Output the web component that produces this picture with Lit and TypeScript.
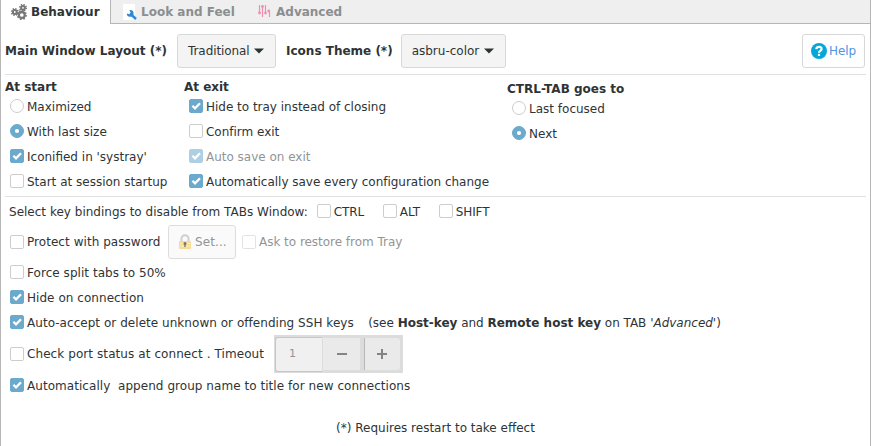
import { LitElement, html, css, svg, nothing } from "lit";
import { customElement, property } from "lit/decorators.js";

@customElement("check-item")
class CheckItem extends LitElement {
  @property({ type: String }) kind = "check";
  @property({ type: Boolean }) on = false;
  @property({ type: Boolean }) dim = false;

  static styles = css`
    :host { display: block; height: 25px; white-space: pre; }
    .row { display: flex; align-items: flex-start; }
    .box { box-sizing: border-box; width: 14px; height: 14px; border: 1px solid #cdcdcd; border-radius: 2px; background: #fff; margin: 5px 3px 0 0; flex: none; }
    .text { padding-top: var(--text-top, 6px); }
    .radio { border-radius: 50%; }
    .on { background: #6ba9cd; border-color: #6ba9cd; }
    .dim .box { opacity: 0.55; }
    .dim { color: #929595; }
    svg { display: block; margin: -1px; }
  `;

  render() {
    const mark = this.kind === "radio"
      ? svg`<circle cx="7" cy="7" r="2.1" fill="#fff"/>`
      : svg`<path d="M3.4 6.7 L6 9.3 L11 4.2" fill="none" stroke="#fff" stroke-width="2.3"/>`;
    return html`<div class="row ${this.dim ? "dim" : ""}">
      <span class="box ${this.kind} ${this.on ? "on" : ""}">${this.on
        ? html`<svg width="14" height="14" viewBox="0 0 14 14">${mark}</svg>` : nothing}</span><span class="text"><slot></slot></span></div>`;
  }
}

const gear = (x: number, y: number, r: number, w: number) => {
  const rim = r + w / 2 + 0.3;
  const dash = (rim * Math.PI) / 8;
  return svg`
  <circle cx=${x} cy=${y} r=${r} fill="none" stroke="#777" stroke-width=${w}/>
  <circle cx=${x} cy=${y} r=${rim} fill="none" stroke="#777" stroke-width="1.7" stroke-dasharray=${`${dash} ${dash}`}/>`;
};

@customElement("app-root")
class AppRoot extends LitElement {
  static styles = css`
    :host { display: block; width: 871px; height: 446px; overflow: hidden; background: #fff; color: #2e3436; font: 12px/14px "DejaVu Sans", sans-serif; }
    * { box-sizing: border-box; }
    svg { display: block; flex: none; }
    .page { height: 446px; border: solid #b6b6b6; border-width: 0 1px; }
    .tabs { display: flex; height: 24px; font-weight: bold; white-space: nowrap; }
    .tab { display: flex; padding-top: 5px; }
    .tab svg { margin-top: -1px; }
    .tab.active { width: 109px; padding-left: 10px; gap: 3px; }
    .rest { flex: 1; display: flex; background: #efefef; border-left: 1px solid #b6b6b6; border-bottom: 1px solid #b6b6b6; color: #8b8e8f; }
    .look { padding-left: 12px; width: 147px; gap: 3px; }
    .adv { gap: 5px; }
    .toolbar { display: flex; align-items: center; height: 51px; margin: 0 4px; padding: 4px 0 0; border-bottom: 1px solid #e1e1e1; white-space: nowrap; }
    b { font-weight: bold; }
    .btn { display: flex; align-items: center; height: 34px; border: 1px solid #d8d8d8; border-radius: 3px; background: #f4f4f4; }
    .combo { padding-left: 10px; gap: 5px; }
    .c1 { width: 99px; margin: 0 10px; gap: 4px; letter-spacing: -0.08px; }
    .c2 { width: 105px; margin-left: 8px; }
    .help { margin-left: auto; margin-right: 1px; width: 63px; background: #fff; color: #5294e2; padding-left: 8px; gap: 2px; letter-spacing: -0.1px; }
    .columns { display: flex; height: 122px; margin: 0 4px; padding-top: 5px; border-bottom: 1px solid #e1e1e1; }
    .columns b { display: block; white-space: nowrap; height: 14px; }
    .columns check-item { margin-left: 5px; }
    .a { width: 179px; }
    .b { width: 323px; letter-spacing: -0.015px; }
    .c { padding-top: 2px; }
    .row { display: flex; align-items: flex-start; padding-left: 9px; white-space: pre; }
    .keys { height: 28px; padding: 2px 0 0 8px; }
    .keys > span { padding-top: 6px; letter-spacing: 0.01px; }
    .keys check-item { letter-spacing: -0.15px; }
    .keys check-item:nth-of-type(1) { margin-left: 9px; width: 66px; }
    .keys check-item:nth-of-type(2) { width: 56px; }
    .protect { height: 35px; --text-top: 5px; }
    .protect check-item { margin-top: 5px; letter-spacing: -0.03px; }
    .protect check-item:first-child { width: 151px; letter-spacing: 0.05px; }
    .set { width: 68px; margin: 0 6px 0 7px; padding-left: 9px; gap: 3px; background: #fafafa; border-color: #dddddd; color: #929595; letter-spacing: 0.1px; }
    .line { height: 25px; letter-spacing: 0.05px; }
    .ssh { letter-spacing: 0.04px; }
    .ssh .note { letter-spacing: -0.01px; margin-left: -1px; }
    .port { height: 38px; --text-top: 5px; }
    .port check-item { width: 254px; margin-top: 7px; letter-spacing: 0.08px; }
    .spin { display: flex; width: 129px; height: 38px; margin-left: 10px; padding: 2px 2px 2px 1px; background: #dcdcdc; }
    .num { width: 47px; height: 35px; padding: 9px 0 0 13px; border: 1px solid #c6c6c6; border-right: 0; border-radius: 3px 0 0 3px; background: #f0f0f0; color: #929595; font-size: 11px; }
    .step { display: flex; justify-content: center; align-items: center; height: 32px; margin-top: 1px; background: #eaeaea; }
    .minus { width: 37px; margin-left: 1px; }
    .plus { width: 36px; margin-left: 4px; padding-right: 1px; border-left: 1px solid #b8b8b8; border-radius: 0 3px 3px 0; }
    .foot { margin-top: 23px; text-align: center; height: 14px; }
  `;

  render() {
    const arrow = html`<svg width="10" height="6" viewBox="0 0 10 6"><path d="M0 .5H10L5 5.5Z" fill="#2e3436"/></svg>`;
    return html`<div class="page">
      <div class="tabs">
        <div class="tab active">
          <svg width="17" height="16" viewBox="0 0 17 16">${gear(3.8, 8, 1.9, 2)}${gear(12, 3.8, 1.9, 2)}${gear(10.8, 11, 2.9, 2.1)}</svg>
          <span>Behaviour</span>
        </div>
        <div class="rest">
          <div class="tab look">
            <svg width="15" height="16" viewBox="0 0 15 16"><rect width="12" height="16" fill="#fff"/><path d="M7.5 10L13 15" stroke="#2e87d2" stroke-width="2.4"/><path d="M6.4 6.1A3.4 3.4 0 1 1 3.8 9.6L6.3 10.2 7.6 8.6Z" fill="#2e87d2"/></svg>
            <span>Look and Feel</span>
          </div>
          <div class="tab adv">
            <svg width="13" height="14" viewBox="0 0 13 14"><g stroke="#ef8fb0" stroke-width="1.2" fill="none"><path d="M1.5 1V9M4.5 1V13M7.5 1V9M11.5 7V13"/></g><g fill="#ef8fb0"><circle cx="1.5" cy="9" r="1.4"/><circle cx="4.5" cy="2.6" r="1.4"/><circle cx="7.5" cy="9" r="1.4"/><circle cx="10.8" cy="7" r="1.4"/></g></svg>
            <span>Advanced</span>
          </div>
        </div>
      </div>
      <div class="toolbar">
        <b>Main Window Layout (*)</b><div class="btn combo c1">Traditional${arrow}</div>
        <b>Icons Theme (*)</b><div class="btn combo c2">asbru-color${arrow}</div>
        <div class="btn help"><svg width="16" height="16" viewBox="0 0 16 16"><circle cx="8" cy="8" r="8" fill="#06a7d8"/><path d="M5.3 6.1C5.6 3.3 10.7 3.2 10.6 6.1C10.5 7.9 8 7.8 8 9.8" fill="none" stroke="#fff" stroke-width="2.2"/><rect x="6.9" y="10.8" width="2.2" height="2.2" fill="#fff"/></svg>Help</div>
      </div>
      <div class="columns">
        <div class="a"><b>At start</b>
          <check-item kind="radio">Maximized</check-item>
          <check-item kind="radio" on>With last size</check-item>
          <check-item on>Iconified in 'systray'</check-item>
          <check-item>Start at session startup</check-item>
        </div>
        <div class="b"><b>At exit</b>
          <check-item on>Hide to tray instead of closing</check-item>
          <check-item>Confirm exit</check-item>
          <check-item on dim>Auto save on exit</check-item>
          <check-item on>Automatically save every configuration change</check-item>
        </div>
        <div class="c"><b>CTRL-TAB goes to</b>
          <check-item kind="radio">Last focused</check-item>
          <check-item kind="radio" on>Next</check-item>
        </div>
      </div>
      <div class="row keys"><span>Select key bindings to disable from TABs Window:</span><check-item>CTRL</check-item><check-item>ALT</check-item><check-item>SHIFT</check-item></div>
      <div class="row protect"><check-item>Protect with password</check-item><div class="btn set"><svg width="14" height="16" viewBox="0 0 14 16"><path d="M3.5 8V4.5A3.5 3.3 0 0 1 10.5 4.5V8" fill="none" stroke="#cfcfcf" stroke-width="2"/><rect x="1" y="7" width="12" height="8" rx="1" fill="#f6dc94"/><path d="M2 9.5H12M2 12H12" stroke="#fbeec5"/><circle cx="7" cy="9.5" r="1.5" fill="#777"/><path d="M7 9V13" stroke="#777" stroke-width="1.4"/></svg>Set...</div><check-item dim>Ask to restore from Tray</check-item></div>
      <div class="row line"><check-item>Force split tabs to 50%</check-item></div>
      <div class="row line"><check-item on>Hide on connection</check-item></div>
      <div class="row line ssh"><check-item on>Auto-accept or delete unknown or offending SSH keys    <span class="note">(see <b>Host-key</b> and <b>Remote host key</b> on TAB '<i>Advanced</i>')</span></check-item></div>
      <div class="row port"><check-item>Check port status at connect . Timeout</check-item><div class="spin"><div class="num">1</div><div class="step minus"><svg width="10" height="10"><rect y="4" width="10" height="2" fill="#818485"/></svg></div><div class="step plus"><svg width="10" height="10"><path d="M0 4H4V0H6V4H10V6H6V10H4V6H0Z" fill="#818485"/></svg></div></div></div>
      <div class="row line"><check-item on>Automatically  append group name to title for new connections</check-item></div>
      <div class="foot">(*) Requires restart to take effect</div>
    </div>`;
  }
}
